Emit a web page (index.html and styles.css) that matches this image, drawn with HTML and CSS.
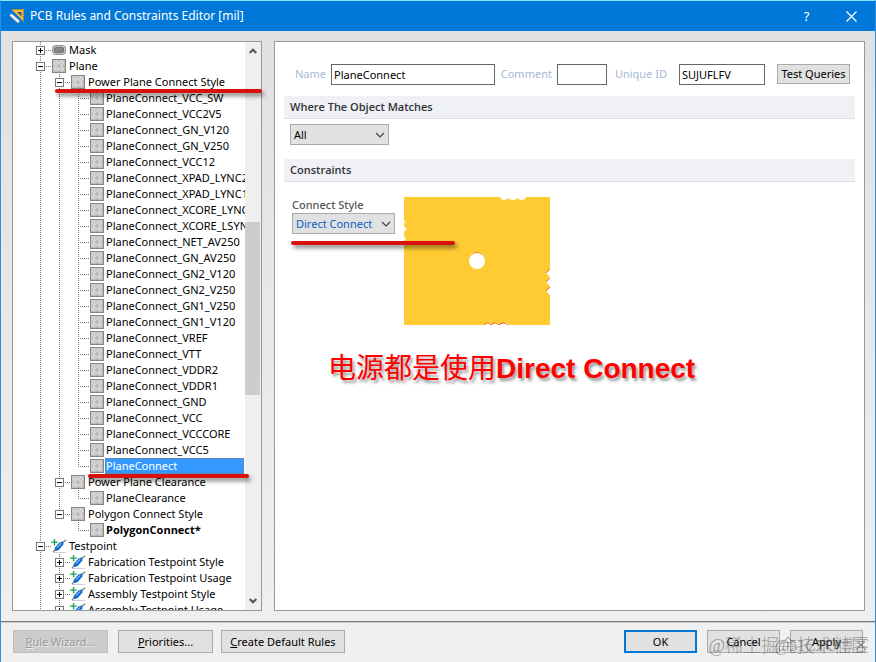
FILE: index.html
```html
<!DOCTYPE html>
<html lang="en">
<head>
<meta charset="utf-8">
<title>PCB Rules and Constraints Editor [mil]</title>
<link rel="stylesheet" href="styles.css">
</head>
<body>
<svg class="defs" aria-hidden="true">
  <symbol id="i-plane" viewBox="0 0 14 14">
    <rect x=".5" y=".5" width="13" height="13" fill="#bababa" stroke="#858585"/>
    <path d="M1.500 12.500V1.500H12.500" fill="none" stroke="#cfcfcf"/>
    <g fill="none" stroke="#f2f2f2"><path d="M2.500 4.500v-1l1-1h1l1 1.500h3l1-1.500h1l1 1v1L10 5.500v3l1.500 1v1l-1 1h-1L8.500 10h-3l-1 1.500h-1l-1-1v-1L4 8.500v-3z"/></g>
    <path d="M4.500 4.500l1.500 1.500M9.500 4.500L8 6M4.500 9.500L6 8M9.500 9.500L8 8" stroke="#dedede"/>
  </symbol>
  <symbol id="i-mask" viewBox="0 0 14 14">
    <rect x=".5" y="2.500" width="13" height="9" rx="3" fill="#c6c6c6" stroke="#8d8d8d"/>
    <rect x="2.500" y="4.500" width="9" height="5" rx="1.500" fill="#858585" stroke="#707070"/>
  </symbol>
  <symbol id="i-probe" viewBox="0 0 16 14">
    <path d="M2 13.500h13" stroke="#d0d0d0"/>
    <path d="M2 13L5.500 9.500M11.500 4L15 .8" stroke="#858585" stroke-width="1.400"/>
    <path d="M4 12L3.600 9 8.500 3.400 12 2.400 12.600 5.200 7.500 11.200z" fill="#1763c6"/>
    <path d="M5.800 8.800L10.400 4.200" stroke="#5fb0ff" stroke-width="1.500"/>
    <path d="M3.500 0v6.500M.2 3.200h6.500" stroke="#10a34a" stroke-width="1.300"/>
  </symbol>
  <symbol id="i-down" viewBox="0 0 10 6"><path d="M1 1l4 4 4-4" fill="none" stroke="#444" stroke-width="1.200"/></symbol>
  <symbol id="i-scroll" viewBox="0 0 8 6"><path d="M.7 1l3.300 3.300L7.300 1" fill="none" stroke="#555" stroke-width="2"/></symbol>
</svg>
<div class="window">
  <header class="titlebar">
    <svg class="app-icon" viewBox="0 0 16 16" aria-hidden="true">
      <path d="M2 1h13v13z" fill="#f0b93b"/><path d="M8 4h4.500v4.500z" fill="#285d86"/>
      <path d="M2.500 1.500h12M14.500 2v11" stroke="#6e5a22" stroke-dasharray="1 1"/>
      <path d="M1.500 7.500l8 7" stroke="#477796" stroke-width="4"/><path d="M1.500 6.500l8.500 7.500" stroke="#f1f4f7" stroke-width="2.600"/>
    </svg>
    <h1>PCB Rules and Constraints Editor [mil]</h1>
    <button class="caption" type="button">?</button>
    <button class="caption" type="button" aria-label="Close"><svg width="11" height="11" viewBox="0 0 11 11"><path d="M.5.5l10 10M10.500.5l-10 10" stroke="#fff" stroke-width="1.200"/></svg></button>
  </header>

  <main class="content">
    <nav class="tree-panel" aria-label="Design rules">
      <ul class="tree">
        <li><div class="row"><span class="toggle plus"></span><svg><use href="#i-mask"/></svg><span class="label">Mask</span></div></li>
        <li><div class="row"><span class="toggle"></span><svg><use href="#i-plane"/></svg><span class="label">Plane</span></div>
          <ul>
            <li><div class="row"><span class="toggle"></span><svg><use href="#i-plane"/></svg><span class="label">Power Plane Connect Style</span></div>
              <ul class="leaves">
                <li><div class="row"><svg><use href="#i-plane"/></svg><span class="label">PlaneConnect_VCC_SW</span></div></li>
                <li><div class="row"><svg><use href="#i-plane"/></svg><span class="label">PlaneConnect_VCC2V5</span></div></li>
                <li><div class="row"><svg><use href="#i-plane"/></svg><span class="label">PlaneConnect_GN_V120</span></div></li>
                <li><div class="row"><svg><use href="#i-plane"/></svg><span class="label">PlaneConnect_GN_V250</span></div></li>
                <li><div class="row"><svg><use href="#i-plane"/></svg><span class="label">PlaneConnect_VCC12</span></div></li>
                <li><div class="row"><svg><use href="#i-plane"/></svg><span class="label">PlaneConnect_XPAD_LYNC2</span></div></li>
                <li><div class="row"><svg><use href="#i-plane"/></svg><span class="label">PlaneConnect_XPAD_LYNC1</span></div></li>
                <li><div class="row"><svg><use href="#i-plane"/></svg><span class="label">PlaneConnect_XCORE_LYNC</span></div></li>
                <li><div class="row"><svg><use href="#i-plane"/></svg><span class="label">PlaneConnect_XCORE_LSYN</span></div></li>
                <li><div class="row"><svg><use href="#i-plane"/></svg><span class="label">PlaneConnect_NET_AV250</span></div></li>
                <li><div class="row"><svg><use href="#i-plane"/></svg><span class="label">PlaneConnect_GN_AV250</span></div></li>
                <li><div class="row"><svg><use href="#i-plane"/></svg><span class="label">PlaneConnect_GN2_V120</span></div></li>
                <li><div class="row"><svg><use href="#i-plane"/></svg><span class="label">PlaneConnect_GN2_V250</span></div></li>
                <li><div class="row"><svg><use href="#i-plane"/></svg><span class="label">PlaneConnect_GN1_V250</span></div></li>
                <li><div class="row"><svg><use href="#i-plane"/></svg><span class="label">PlaneConnect_GN1_V120</span></div></li>
                <li><div class="row"><svg><use href="#i-plane"/></svg><span class="label">PlaneConnect_VREF</span></div></li>
                <li><div class="row"><svg><use href="#i-plane"/></svg><span class="label">PlaneConnect_VTT</span></div></li>
                <li><div class="row"><svg><use href="#i-plane"/></svg><span class="label">PlaneConnect_VDDR2</span></div></li>
                <li><div class="row"><svg><use href="#i-plane"/></svg><span class="label">PlaneConnect_VDDR1</span></div></li>
                <li><div class="row"><svg><use href="#i-plane"/></svg><span class="label">PlaneConnect_GND</span></div></li>
                <li><div class="row"><svg><use href="#i-plane"/></svg><span class="label">PlaneConnect_VCC</span></div></li>
                <li><div class="row"><svg><use href="#i-plane"/></svg><span class="label">PlaneConnect_VCCCORE</span></div></li>
                <li><div class="row"><svg><use href="#i-plane"/></svg><span class="label">PlaneConnect_VCC5</span></div></li>
                <li><div class="row"><svg><use href="#i-plane"/></svg><span class="label selected">PlaneConnect</span></div></li>
              </ul>
            </li>
            <li><div class="row"><span class="toggle"></span><svg><use href="#i-plane"/></svg><span class="label">Power Plane Clearance</span></div>
              <ul class="leaves"><li><div class="row"><svg><use href="#i-plane"/></svg><span class="label">PlaneClearance</span></div></li></ul>
            </li>
            <li><div class="row"><span class="toggle"></span><svg><use href="#i-plane"/></svg><span class="label">Polygon Connect Style</span></div>
              <ul class="leaves"><li><div class="row"><svg><use href="#i-plane"/></svg><span class="label changed">PolygonConnect*</span></div></li></ul>
            </li>
          </ul>
        </li>
        <li><div class="row"><span class="toggle"></span><svg class="probe"><use href="#i-probe"/></svg><span class="label">Testpoint</span></div>
          <ul>
            <li><div class="row"><span class="toggle plus"></span><svg class="probe"><use href="#i-probe"/></svg><span class="label">Fabrication Testpoint Style</span></div></li>
            <li><div class="row"><span class="toggle plus"></span><svg class="probe"><use href="#i-probe"/></svg><span class="label">Fabrication Testpoint Usage</span></div></li>
            <li><div class="row"><span class="toggle plus"></span><svg class="probe"><use href="#i-probe"/></svg><span class="label">Assembly Testpoint Style</span></div></li>
            <li><div class="row"><span class="toggle plus"></span><svg class="probe"><use href="#i-probe"/></svg><span class="label">Assembly Testpoint Usage</span></div></li>
          </ul>
        </li>
      </ul>
      <div class="scrollbar">
        <svg class="up"><use href="#i-scroll"/></svg>
        <div class="track"><div class="thumb"></div></div>
        <svg><use href="#i-scroll"/></svg>
      </div>
    </nav>

    <section class="editor">
      <form class="fields">
        <label for="name">Name</label><input id="name" class="name" value="PlaneConnect">
        <label for="comment">Comment</label><input id="comment" class="comment">
        <label for="uid">Unique ID</label><input id="uid" class="uid" value="SUJUFLFV">
        <button type="button">Test Queries</button>
      </form>
      <h2>Where The Object Matches</h2>
      <div class="scope">
        <span class="select all"><select aria-label="Object scope"><option>All</option></select><svg><use href="#i-down"/></svg></span>
      </div>
      <h2>Constraints</h2>
      <div class="constraint">
        <div class="style-field">
          <label for="style">Connect Style</label>
          <span class="select direct"><select id="style"><option>Direct Connect</option></select><svg><use href="#i-down"/></svg></span>
          <span class="mark mark-style"></span>
        </div>
        <svg class="preview" viewBox="0 0 146 128" role="img" aria-label="Direct connection">
          <path fill="#ffcb33" d="M0 0H96Q97 3 100 3T104 1Q106 3 109 3T113 1Q115 3 118 3T122 0H146V72L142 76 146 80 142 85 146 89 142 94 146 98V128H105Q104 125 100 126L96 128Q95 125 91 126L87 128Q86 125 83 126L80 128H0V44L2 42 0 39V35L3 32 0 29V25L2 27 0 22Z"/>
          <path d="M146 72l-4 4M146 81l-4 4M146 90l-4 4M80 128q4-4 7 0 4-4 8 0 4-4 9 0M66 60q7-9 14 0" fill="none" stroke="#e96b25"/>
          <circle cx="73" cy="64" r="8" fill="#fff"/>
        </svg>
      </div>
      <p class="note">电源都是使用<b>Direct Connect</b></p>
    </section>
    <span class="mark mark-group"></span>
    <span class="mark mark-rule"></span>
  </main>

  <footer class="buttons">
    <button type="button" disabled><u>R</u>ule Wizard...</button>
    <button type="button"><u>P</u>riorities...</button>
    <button type="button" class="wide"><u>C</u>reate Default Rules</button>
    <span class="spacer"></span>
    <button type="button" class="short primary">OK</button>
    <button type="button" class="short">Cancel</button>
    <button type="button" class="short">Apply</button>
    <span class="watermark first">@稀土掘金技术社区</span>
    <span class="watermark second">@51CTO博客</span>
  </footer>
</div>
</body>
</html>
```
FILE: styles.css
```css
* { box-sizing: border-box; }
body { margin: 0; font: 11px/16px "Noto Sans", "Noto Sans CJK SC", sans-serif; color: #000; }
button, input, select { font: inherit; color: inherit; margin: 0; border-radius: 0; }
ul { list-style: none; margin: 0; padding: 0; }
h1, h2, p { margin: 0; }
.defs { position: absolute; width: 0; height: 0; }

.window { height: 100vh; display: flex; flex-direction: column; border: 1px solid #2c91df; border-top-color: #8be3fb; border-bottom: 0; background: #efefef; }
.titlebar { flex: none; height: 30px; display: flex; align-items: center; padding: 0 1px 0 8px; background: #0078d9; color: #fff; }
.app-icon { width: 16px; height: 16px; margin-right: 5px; }
.titlebar h1 { flex: 1; font-size: 12px; font-weight: 400; }
.caption { width: 45px; height: 28px; padding: 0; border: 0; background: none; font-size: 13px; display: flex; align-items: center; justify-content: center; }

.content { position: relative; flex: 1; min-height: 0; display: flex; gap: 12px; padding: 10px 10px 10px 11px; background: linear-gradient(#e1e1e1, #efefef); border-bottom: 1px solid #777; }
.tree-panel, .editor { border: 1px solid #949a9f; background: #fff; overflow: hidden; }
.tree-panel { flex: none; width: 250px; display: flex; }
.tree { flex: 1; min-width: 0; padding-left: 23px; overflow: hidden; }
.tree ul { padding-left: 19px; }
.tree li { background: repeating-linear-gradient(#777 0 1px, transparent 1px 2px) 4px 0 / 1px 100% no-repeat; }
.tree ul > li:last-child { background-size: 1px 8px; }
.row { display: flex; align-items: center; height: 16px; white-space: nowrap; background: repeating-linear-gradient(90deg, #777 0 1px, transparent 1px 2px) 4px 8px / 12px 1px no-repeat; padding-left: 16px; }
.row:has(.toggle) { padding-left: 0; }
.row svg { flex: none; width: 14px; height: 14px; overflow: visible; }
.row .probe { width: 16px; margin: 0 -1px; }
.toggle { flex: none; width: 9px; height: 9px; margin-right: 7px; border: 1px solid #777; background: linear-gradient(#000, #000) center / 5px 1px no-repeat, #fff; }
.plus { background: linear-gradient(#000, #000) center / 5px 1px no-repeat, linear-gradient(#000, #000) center / 1px 5px no-repeat, #fff; }
.label { padding-left: 3px; }
.leaves .label { margin-left: 1px; padding-left: 1px; }
.label.selected { flex: 1; margin-right: 1px; background: #3399ff; color: #fff; outline: 1px solid #5b8cb9; outline-offset: -1px; }
.label.changed { font-family: "Open Sans", sans-serif; font-weight: 700; }

.scrollbar { flex: none; width: 16px; display: flex; flex-direction: column; align-items: center; background: #efefef; padding: 6px 0; }
.scrollbar svg { width: 8px; height: 6px; }
.scrollbar .up { transform: rotate(180deg); }
.track { flex: 1; width: 100%; padding: 168px 1px 0 0; }
.thumb { height: 173px; background: #cdcdcd; }

.editor { flex: 1; min-width: 0; padding: 21px 9px 0; }
.fields { display: flex; align-items: center; height: 22px; padding: 0 5px 0 11px; color: #a5b9d4; white-space: nowrap; }
.fields label { margin-right: 5px; }
.fields input { height: 21px; margin-right: 6px; padding: 0 2px; border: 1px solid #666; background: #fff; color: #000; min-width: 0; }
.fields .name { flex: 1; }
.fields .comment { width: 50px; margin-right: 8px; }
.fields .uid { width: 86px; margin-right: 12px; }
.fields label[for="uid"] { margin-right: 12px; }
.fields button { width: 73px; height: 20px; padding: 0; border: 1px solid #aaa; background: #e1e1e1; color: #000; }
h2 { height: 23px; margin-top: 11px; padding: 0 6px; background: #f0f1f4; border-bottom: 1px solid #dcdfe3; font: 600 11px/22px "Open Sans", sans-serif; color: #303338; }
.scope { padding: 5px 6px 3px; }
.select { display: grid; align-items: center; height: 21px; }
.select > * { grid-area: 1 / 1; }
.select select { appearance: none; width: 100%; height: 21px; padding: 0 3px; border: 1px solid #aaa; background: #e1e1e1; }
.select svg { justify-self: end; width: 10px; height: 6px; margin-right: 4px; pointer-events: none; }
.all { width: 99px; }
.direct { width: 103px; color: #0b5fc4; }
.constraint { display: flex; gap: 9px; padding: 15px 8px 0; }
.style-field { position: relative; }
.style-field label { display: block; color: #555; font-weight: 500; }
.preview { width: 146px; height: 128px; }
.note { padding: 28px 0 0 44px; font: 28px/32px "Liberation Sans", "Noto Sans CJK SC", sans-serif; color: #f00; text-shadow: 2px 3px 3px rgba(0, 0, 0, .4); }

.mark { position: absolute; height: 4px; border-radius: 2px; background: #d9110d; box-shadow: 2px 3px 4px rgba(0, 0, 0, .5); }
.mark-group { left: 54px; top: 58px; width: 207px; }
.mark-rule { left: 87px; top: 443px; width: 161px; }
.mark-style { left: -1px; top: 44px; width: 164px; }

.buttons { position: relative; flex: none; height: 40px; display: flex; align-items: flex-start; gap: 10px; padding: 7px 12px 0 12px; border-top: 1px solid #ccc; background: #f0f0f0; }
.buttons button { width: 95px; height: 23px; padding: 0; border: 1px solid #aaa; background: #e1e1e1; }
.buttons button:disabled { background: #ccc; border-color: #bfbfbf; color: #999; text-shadow: 1px 1px #eee; }
.buttons button + button.wide { width: 124px; margin-left: -2px; }
.buttons button.short { width: 73px; }
.buttons .primary { border: 2px solid #0078d7; }
.spacer { flex: 1; }
.watermark { position: absolute; right: 6px; top: 11px; line-height: 24px; font-family: "Liberation Serif", "Noto Sans CJK SC", serif; font-weight: 300; color: rgba(80, 80, 80, .5); pointer-events: none; white-space: nowrap; }
.first { font-size: 18px; }
.second { font-size: 16px; }
```
